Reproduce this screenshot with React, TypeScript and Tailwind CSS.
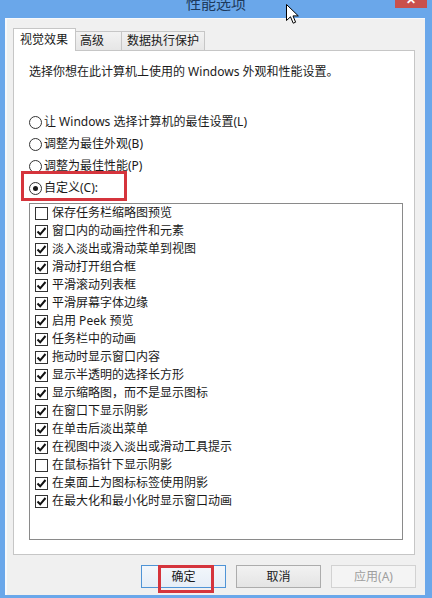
import React from "react";

const items: [string, boolean][] = [
  ["保存任务栏缩略图预览", false],
  ["窗口内的动画控件和元素", true],
  ["淡入淡出或滑动菜单到视图", true],
  ["滑动打开组合框", true],
  ["平滑滚动列表框", true],
  ["平滑屏幕字体边缘", true],
  ["启用 Peek 预览", true],
  ["任务栏中的动画", true],
  ["拖动时显示窗口内容", true],
  ["显示半透明的选择长方形", true],
  ["显示缩略图，而不是显示图标", true],
  ["在窗口下显示阴影", true],
  ["在单击后淡出菜单", true],
  ["在视图中淡入淡出或滑动工具提示", true],
  ["在鼠标指针下显示阴影", false],
  ["在桌面上为图标标签使用阴影", true],
  ["在最大化和最小化时显示窗口动画", true],
];

function Radio({ checked }: { checked?: boolean }) {
  return (
    <span className="w-[13px] h-[13px] rounded-full border border-[#333333] bg-white flex items-center justify-center shrink-0">
      {checked && <span className="w-[5px] h-[5px] rounded-full bg-[#1a1a1a]" />}
    </span>
  );
}

function Check({ checked }: { checked: boolean }) {
  return (
    <span className="w-[13px] h-[13px] border border-[#333333] bg-white flex items-center justify-center shrink-0">
      {checked && (
        <svg width="11" height="11" viewBox="0 0 11 11">
          <path d="M1.5 5.5 L4.2 8.3 L9.5 2" fill="none" stroke="#111" strokeWidth="2" />
        </svg>
      )}
    </span>
  );
}

export default function App() {
  return (
    <div
      className="w-[432px] h-[598px] bg-[#6aa7ea] flex flex-col relative overflow-hidden text-[12px] text-[#1a1a1a]"
      style={{ fontFamily: '"Noto Sans", "Noto Sans CJK SC", sans-serif' }}
    >
      {/* title bar */}
      <div className="h-[18px] shrink-0 relative flex justify-center">
        <span className="text-[15px] leading-[15px] -mt-[4px] text-[#1d3a5c]">性能选项</span>
        <div className="absolute top-0 right-[5px] w-[32px] h-[8px] bg-[#c9504c] flex justify-center overflow-hidden">
          <span className="text-white text-[12px] leading-[12px] -mt-[6px] font-bold">✕</span>
        </div>
      </div>
      {/* body */}
      <div className="flex-1 ml-[5px] mr-[7px] mb-[3px] bg-[#f0f0f0] border-l-2 border-t border-[#f7f9fc] flex flex-col pl-[6px] pr-[9px]">
        {/* tabs */}
        <div className="flex items-end h-[31px] pt-[8px]">
          <div className="h-[23px] w-[63px] bg-white border border-b-0 border-[#c6c6c6] flex items-center pl-[6px] relative z-10 -mb-px">
            视觉效果
          </div>
          <div className="h-[19px] w-[46px] bg-gradient-to-b from-[#f2f2f2] to-[#e6e6e6] border border-l-0 border-b-0 border-[#c6c6c6] flex items-center pl-[4px]">
            高级
          </div>
          <div className="h-[19px] w-[83px] bg-gradient-to-b from-[#f2f2f2] to-[#e6e6e6] border border-l-0 border-b-0 border-[#c6c6c6] flex items-center pl-[5px]">
            数据执行保护
          </div>
        </div>
        {/* panel */}
        <div className="w-[402px] h-[505px] bg-white border border-[#c6c6c6] flex flex-col pl-[15px]">
          <div className="h-[18px] mt-[12px] leading-[18px]">选择你想在此计算机上使用的 Windows 外观和性能设置。</div>
          <div className="mt-[30px] flex flex-col">
            {[
              ["让 Windows 选择计算机的最佳设置(L)", false],
              ["调整为最佳外观(B)", false],
              ["调整为最佳性能(P)", false],
              ["自定义(C):", true],
            ].map(([t, c], i) => (
              <div key={i} className="h-[22px] flex items-center gap-[2px]">
                <Radio checked={c as boolean} />
                <span>{t as string}</span>
              </div>
            ))}
          </div>
          <div className="mt-[4px] w-[374px] h-[337px] border border-[#8a8a8a] flex flex-col pl-[5px]">
            {items.map(([t, c], i) => (
              <div key={i} className="h-[18px] shrink-0 flex items-center gap-[4px]">
                <Check checked={c} />
                <span>{t}</span>
              </div>
            ))}
          </div>
        </div>
        {/* buttons */}
        <div className="mt-[10px] flex justify-end gap-[10px]">
          <div className="w-[85px] h-[23px] border border-[#4f94d6] bg-gradient-to-b from-[#f3f7fb] to-[#e6eef7] flex items-center justify-center">
            确定
          </div>
          <div className="w-[85px] h-[23px] border border-[#acacac] bg-gradient-to-b from-[#f2f2f2] to-[#e4e4e4] flex items-center justify-center">
            取消
          </div>
          <div className="w-[85px] h-[23px] border border-[#d2d2d2] bg-[#f4f4f4] text-[#9e9e9e] flex items-center justify-center">
            应用(A)
          </div>
        </div>
      </div>

      {/* red annotation boxes */}
      <div className="absolute left-[21px] top-[171px] w-[106px] h-[30px] border-[3px] border-[#d5343c]" />
      <div className="absolute left-[158px] top-[565px] w-[56px] h-[28px] border-[3px] border-[#d5343c]" />

      {/* mouse cursor */}
      <svg className="absolute left-[286px] top-[4px]" width="14" height="21" viewBox="0 0 14 21">
        <path d="M0.5 0.5 L0.5 16.5 L4.5 12.8 L7.2 19.2 L9.6 18.2 L7 11.9 L12.3 11.9 Z" fill="white" stroke="black" strokeWidth="1" strokeLinejoin="round" />
      </svg>
    </div>
  );
}
